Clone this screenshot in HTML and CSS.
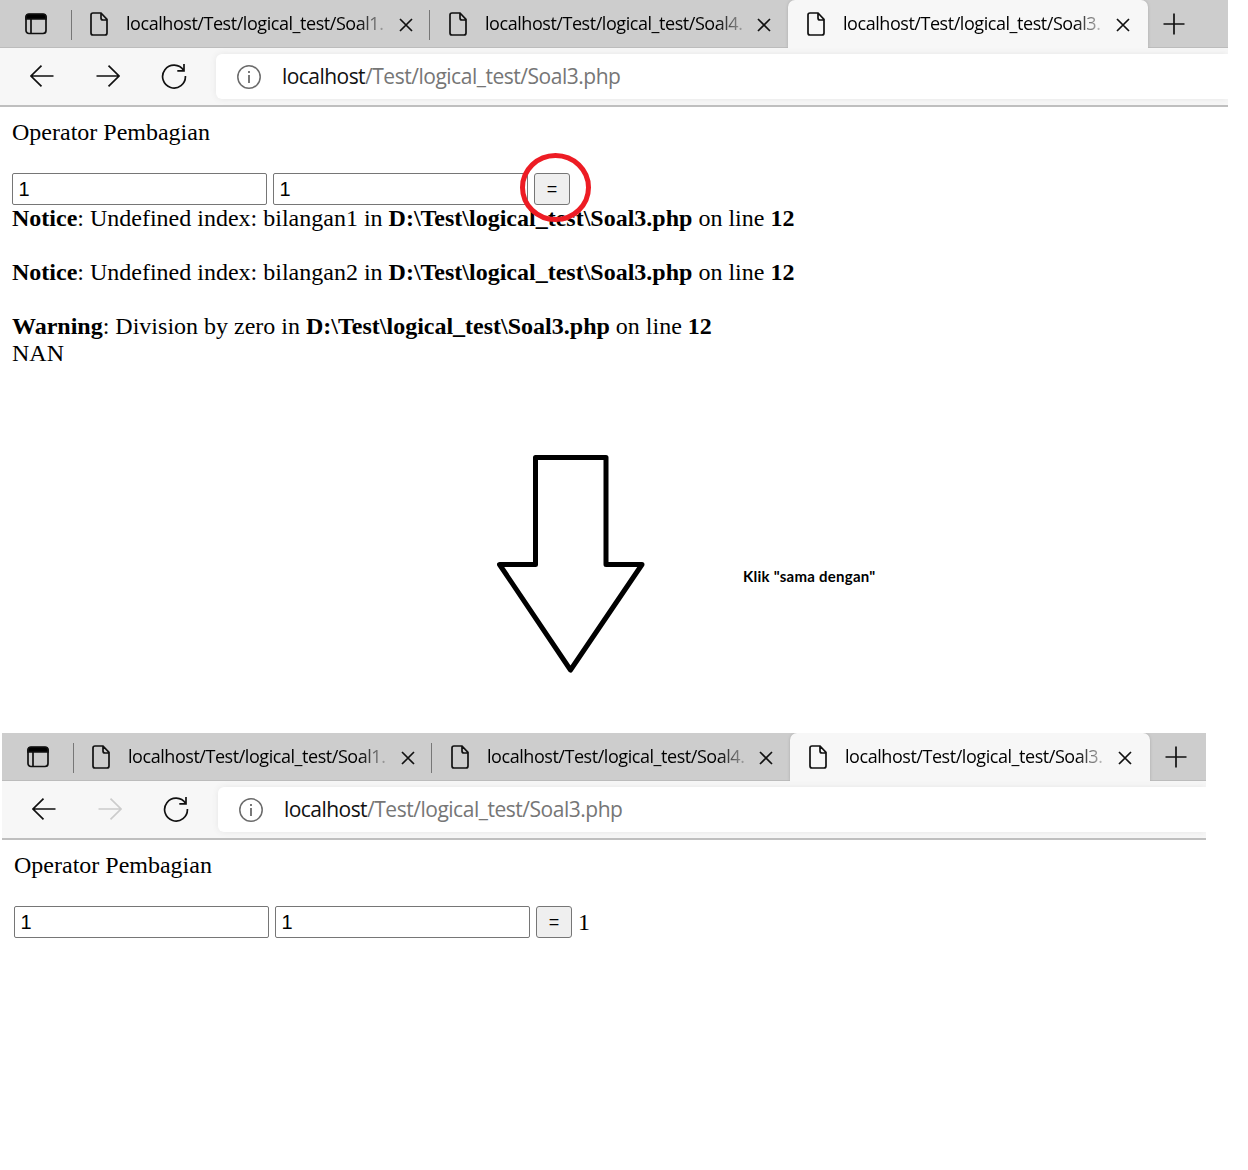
FILE: index.html
```html
<!DOCTYPE html>
<html lang="id">
<head>
<meta charset="utf-8">
<title>Operator Pembagian</title>
<link rel="stylesheet" href="styles.css">
</head>
<body>
<svg class="defs" width="0" height="0" aria-hidden="true">
  <symbol id="page" viewBox="0 0 18 24"><path d="M3 1H11L17 7.4V21Q17 23 15 23H3Q1 23 1 21V3Q1 1 3 1ZM11 1V6Q11 8 13 8H17"/></symbol>
  <symbol id="close" viewBox="0 0 14 14"><path d="M1 1L13 13M13 1L1 13"/></symbol>
  <symbol id="panel" viewBox="0 0 22 22"><rect x="1" y="1.5" width="20" height="19" rx="3"/><path d="M6 6V20"/><path d="M1 6V4Q1 1 4 1H18Q21 1 21 4V6Z" fill="#000"/></symbol>
  <symbol id="back" viewBox="0 0 24 22"><path d="M23.5 11H1M11.5 .7L1 11L11.5 21.3"/></symbol>
  <symbol id="forward" viewBox="0 0 24 22"><path d="M.5 11H23M12.5 .7L23 11L12.5 21.3"/></symbol>
  <symbol id="reload" viewBox="0 0 26 26"><path d="M22.6 7.4A11.4 11.4 0 1 0 24.4 13M23 1V7.8H16.3"/></symbol>
  <symbol id="info" viewBox="0 0 24 24"><circle cx="12" cy="12" r="11.2"/><path d="M12 10V18M12 6V8" stroke-width="1.8"/></symbol>
  <symbol id="plus" viewBox="0 0 22 22"><path d="M11 .5V21.5M.5 11H21.5"/></symbol>
</svg>

<section class="window">
  <div class="tabs">
    <div class="tab-menu"><svg class="icon panel"><use href="#panel"/></svg></div>
    <div class="tab"><svg class="icon page"><use href="#page"/></svg><span class="title">localhost/Test/logical_test/Soal1.</span><svg class="icon close"><use href="#close"/></svg></div>
    <div class="tab second"><svg class="icon page"><use href="#page"/></svg><span class="title">localhost/Test/logical_test/Soal4.</span><svg class="icon close"><use href="#close"/></svg></div>
    <div class="tab active"><svg class="icon page"><use href="#page"/></svg><span class="title">localhost/Test/logical_test/Soal3.</span><svg class="icon close"><use href="#close"/></svg></div>
    <div class="new-tab"><svg class="icon plus"><use href="#plus"/></svg></div>
  </div>
  <div class="toolbar">
    <svg class="icon arrow"><use href="#back"/></svg>
    <svg class="icon arrow"><use href="#forward"/></svg>
    <svg class="icon reload"><use href="#reload"/></svg>
    <div class="address"><svg class="icon info"><use href="#info"/></svg><span class="url"><span class="host">localhost</span>/Test/logical_test/Soal3.php</span></div>
  </div>
  <main class="content">
    <div>Operator Pembagian</div>
    <form class="form">
      <input class="field" type="text" value="1">
      <input class="field" type="text" value="1">
      <span class="submit-wrap"><button class="submit" type="button">=</button>
        <svg class="ring" viewBox="0 0 72 70"><ellipse cx="36.5" cy="35.5" rx="33" ry="32"/></svg>
      </span>
    </form>
    <div class="message"><b>Notice</b>: Undefined index: bilangan1 in <b>D:\Test\logical_test\Soal3.php</b> on line <b>12</b></div>
    <div class="message"><b>Notice</b>: Undefined index: bilangan2 in <b>D:\Test\logical_test\Soal3.php</b> on line <b>12</b></div>
    <div><b>Warning</b>: Division by zero in <b>D:\Test\logical_test\Soal3.php</b> on line <b>12</b></div>
    <div>NAN</div>
  </main>
</section>

<div class="step">
  <svg class="down" viewBox="0 0 148 220"><path d="M38.5 4.5H109V111.5H145L73.5 217L2.5 111.5H38.5Z"/></svg>
  <span class="caption">Klik "sama dengan"</span>
</div>

<section class="window result">
  <div class="tabs">
    <div class="tab-menu"><svg class="icon panel"><use href="#panel"/></svg></div>
    <div class="tab"><svg class="icon page"><use href="#page"/></svg><span class="title">localhost/Test/logical_test/Soal1.</span><svg class="icon close"><use href="#close"/></svg></div>
    <div class="tab second"><svg class="icon page"><use href="#page"/></svg><span class="title">localhost/Test/logical_test/Soal4.</span><svg class="icon close"><use href="#close"/></svg></div>
    <div class="tab active"><svg class="icon page"><use href="#page"/></svg><span class="title">localhost/Test/logical_test/Soal3.</span><svg class="icon close"><use href="#close"/></svg></div>
    <div class="new-tab"><svg class="icon plus"><use href="#plus"/></svg></div>
  </div>
  <div class="toolbar">
    <svg class="icon arrow"><use href="#back"/></svg>
    <svg class="icon arrow disabled"><use href="#forward"/></svg>
    <svg class="icon reload"><use href="#reload"/></svg>
    <div class="address"><svg class="icon info"><use href="#info"/></svg><span class="url"><span class="host">localhost</span>/Test/logical_test/Soal3.php</span></div>
  </div>
  <main class="content">
    <div>Operator Pembagian</div>
    <form class="form">
      <input class="field" type="text" value="1">
      <input class="field" type="text" value="1">
      <button class="submit" type="button">=</button>
      <span class="answer">1</span>
    </form>
  </main>
</section>
</body>
</html>
```
FILE: styles.css
```css
* { box-sizing: border-box; }
body {
  margin: 0;
  min-height: 1170px;
  background: #fff;
  color: #000;
  font: 24px/27px "Liberation Serif", serif;
}
.defs { display: block; height: 0; }
.window { width: 1228px; }
.result { width: 1204px; margin-left: 2px; }

.icon { display: block; flex: none; fill: none; stroke: #111; stroke-width: 1.7; overflow: visible; }
.panel { width: 22px; height: 22px; }
.page { width: 18px; height: 24px; }
.close { width: 14px; height: 14px; }
.arrow { width: 24px; height: 22px; margin-right: 42px; }
.arrow + .arrow { margin-right: 41px; }
.reload { width: 26px; height: 26px; margin-right: 29px; }
.info { width: 24px; height: 24px; stroke: #6b6b6b; stroke-width: 1.5; }
.plus { width: 22px; height: 22px; }
.disabled { stroke: #ccc; }

.tabs {
  display: flex;
  height: 48px;
  background: #cdcdcd;
  box-shadow: inset 0 -1px #bcbcbc;
  font: 18px/26px "Open Sans", sans-serif;
}
.tab-menu { width: 72px; padding: 13px 0 0 25px; }
.tab-menu, .tab:not(.active):not(.second) {
  background: linear-gradient(#777, #777) right 10px / 1.5px 30px no-repeat;
}
.tab { display: flex; width: 358px; padding: 12px 17px 0 18px; }
.tab.second { padding-left: 19px; }
.tab .title {
  width: 259px;
  margin: -2px 14px 0 18px;
  overflow: hidden;
  white-space: nowrap;
  letter-spacing: -0.45px;
  -webkit-mask-image: linear-gradient(90deg, #000 232px, transparent 264px);
  mask-image: linear-gradient(90deg, #000 232px, transparent 264px);
}
.tab.second .title { width: 258px; }
.tab .close { margin-top: 6px; }
.tab.active {
  width: 360px;
  padding-left: 19px;
  background: #f7f7f7;
  border-radius: 7px 7px 0 0;
  box-shadow: 0 0 3px #aaa;
  clip-path: inset(0 -3px 0 -3px);
}
.new-tab { padding: 13px 0 0 15px; }

.toolbar {
  display: flex;
  align-items: center;
  height: 59px;
  padding: 0 0 1px 30px;
  background: #f7f7f7;
  border-bottom: 2px solid #bfbfbf;
}
.address {
  display: flex;
  align-items: center;
  flex: 1;
  align-self: flex-start;
  height: 45px;
  margin-top: 6px;
  padding-left: 21px;
  background: #fff;
  border-radius: 6px 0 0 6px;
  box-shadow: 0 0 6px #e6e6e6;
  clip-path: inset(-6px 0 -6px -6px);
}
.url {
  margin: 0 0 2px 21px;
  color: #767676;
  font: 21px/30px "Open Sans", sans-serif;
  letter-spacing: -0.48px;
  white-space: nowrap;
}
.host { color: #111; letter-spacing: -0.55px; }

.content { padding: 12px 12px 0; }
.form { display: flex; align-items: center; gap: 6px; height: 32px; margin: 27px 0 0; }
.field, .submit {
  height: 32px;
  margin: 0;
  border: 1px solid #767676;
  border-radius: 2px;
  color: #000;
  font: 20px/24px "Liberation Sans", sans-serif;
}
.field { width: 255px; padding: 1px 5.5px; background: #fff; }
.submit { display: block; width: 36px; padding: 0; background: #efefef; border-radius: 3px; font-size: 18px; }
.submit-wrap { position: relative; }
.ring {
  position: absolute;
  left: -15px;
  top: -21px;
  width: 72px;
  height: 70px;
  fill: none;
  stroke: #ed1c24;
  stroke-width: 5;
}
.message { margin-bottom: 27px; }

.step { display: flex; align-items: flex-start; height: 366px; padding: 86px 0 0 497px; }
.down { width: 148px; height: 220px; fill: none; stroke: #000; stroke-width: 5; stroke-linejoin: round; }
.caption { margin: 113px 0 0 98px; font: 700 15px/20px Lato, sans-serif; letter-spacing: 0.25px; white-space: nowrap; }
```
